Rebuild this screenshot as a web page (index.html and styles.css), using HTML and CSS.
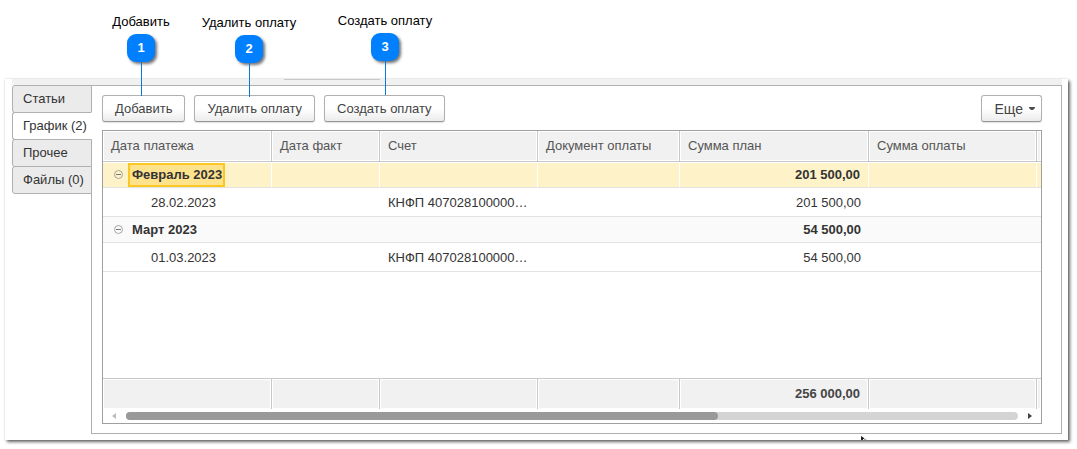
FILE: index.html
```html
<!DOCTYPE html>
<html lang="ru">
<head>
<meta charset="utf-8">
<title>График платежей</title>
<link rel="stylesheet" href="styles.css">
</head>
<body>
<div class="callout callout-add"><span>Добавить</span><b class="badge">1</b><i class="leader"></i></div>
<div class="callout callout-delete"><span>Удалить оплату</span><b class="badge">2</b><i class="leader"></i></div>
<div class="callout callout-create"><span>Создать оплату</span><b class="badge">3</b><i class="leader"></i></div>

<main class="window">
  <div class="strip"><span class="strip-edge"></span></div>
  <div class="layout">
    <nav class="tabs" role="tablist">
      <button class="tab" role="tab">Статьи</button>
      <button class="tab tab-active" role="tab" aria-selected="true">График (2)</button>
      <button class="tab" role="tab">Прочее</button>
      <button class="tab" role="tab">Файлы (0)</button>
    </nav>
    <section class="panel" role="tabpanel">
      <div class="toolbar">
        <button class="btn">Добавить</button>
        <button class="btn">Удалить оплату</button>
        <button class="btn">Создать оплату</button>
        <button class="btn btn-more">Еще<svg width="6" height="3" viewBox="0 0 6 3"><path d="M0 0h6v1L4 3H2L0 1z" fill="#505050"/></svg></button>
      </div>
      <div class="grid">
        <table class="table">
          <colgroup><col class="c-date"><col class="c-fact"><col class="c-account"><col class="c-doc"><col class="c-plan"><col class="c-paid"><col></colgroup>
          <thead>
            <tr><th>Дата платежа</th><th>Дата факт</th><th>Счет</th><th>Документ оплаты</th><th>Сумма план</th><th>Сумма оплаты</th><th></th></tr>
          </thead>
          <tbody>
            <tr class="group selected"><td><div class="group-cell"><svg class="toggle" width="9" height="9" viewBox="0 0 9 9"><circle cx="4.5" cy="4.5" r="4" fill="none" stroke="#a5a5a0"/><path d="M2 4.5h5" stroke="#777"/></svg><span class="group-name">Февраль 2023</span></div></td><td></td><td></td><td></td><td class="num">201 500,00</td><td></td><td></td></tr>
            <tr class="item"><td class="date">28.02.2023</td><td></td><td>КНФП 407028100000…</td><td></td><td class="num">201 500,00</td><td></td><td></td></tr>
            <tr class="group"><td><div class="group-cell"><svg class="toggle" width="9" height="9" viewBox="0 0 9 9"><circle cx="4.5" cy="4.5" r="4" fill="none" stroke="#a5a5a0"/><path d="M2 4.5h5" stroke="#777"/></svg><span class="group-name">Март 2023</span></div></td><td></td><td></td><td></td><td class="num">54 500,00</td><td></td><td></td></tr>
            <tr class="item"><td class="date">01.03.2023</td><td></td><td>КНФП 407028100000…</td><td></td><td class="num">54 500,00</td><td></td><td></td></tr>
            <tr class="empty"><td colspan="7"></td></tr>
          </tbody>
          <tfoot>
            <tr><td></td><td></td><td></td><td></td><td class="num">256 000,00</td><td></td><td></td></tr>
          </tfoot>
        </table>
        <div class="scroll">
          <button class="arrow" aria-label="Влево"><svg width="4" height="6" viewBox="0 0 4 6"><path d="M4 0v6L0 3z" fill="#bdbdbd"/></svg></button>
          <div class="track"><div class="thumb"></div></div>
          <button class="arrow" aria-label="Вправо"><svg width="4" height="6" viewBox="0 0 4 6"><path d="M0 0v6l4-3z" fill="#404040"/></svg></button>
        </div>
      </div>
    </section>
  </div>
  <svg class="pointer" width="7" height="4" viewBox="0 0 7 4"><path d="M0 0l3 2v1H2v1H0z" fill="#222"/><path d="M3 2l3 2H3z" fill="#aaa"/></svg>
</main>
</body>
</html>
```
FILE: styles.css
```css
* { box-sizing: border-box; }

body {
  margin: 0;
  padding: 79px 9px 9px 5px;
  background: #fff;
  color: #333;
  font: 13px/16px "Liberation Sans", Arial, sans-serif;
}

button {
  margin: 0;
  font: inherit;
  color: inherit;
}

/* Numbered callouts over the form */
.callout {
  position: absolute;
  z-index: 1;
  display: flex;
  flex-direction: column;
  align-items: center;
  width: 120px;
  color: #000;
}
.callout-add { left: 81px; top: 14px; }
.callout-delete { left: 189px; top: 15px; }
.callout-create { left: 325px; top: 13px; }
.badge {
  width: 28px;
  height: 28px;
  margin-top: 4px;
  border-radius: 9px;
  background: #0080ff;
  box-shadow: 2px 2px 3px rgba(0, 0, 0, .55);
  color: #fff;
  line-height: 28px;
  text-align: center;
}
.leader {
  width: 1px;
  height: 34px;
  background: #0a78e0;
}

.window {
  position: relative;
  padding: 0 6px 6px 7px;
  background: #fff;
  box-shadow: 2px 2px 3px rgba(0, 0, 0, .6), 0 0 2px rgba(0, 0, 0, .15);
}
.strip {
  height: 6px;
  background: #f1f1f1;
}
.strip-edge {
  display: block;
  width: 96px;
  height: 1px;
  margin-left: 272px;
  background: #c8c8c8;
}
.layout { display: flex; }
.tabs {
  position: relative;
  display: flex;
  flex-direction: column;
  width: 80px;
  margin-right: -1px;
}
.tab {
  height: 28px;
  margin-bottom: -1px;
  padding: 0 0 0 10px;
  border: 1px solid #b0b0b0;
  border-radius: 3px 0 0 3px;
  background: #ebebeb;
  text-align: left;
  white-space: nowrap;
}
.tab-active {
  border-right-color: #fff;
  background: #fff;
}
.panel {
  flex: 1;
  min-width: 0;
  padding: 9px 19px 9px 10px;
  border: 1px solid #b0b0b0;
}

.toolbar {
  display: flex;
  gap: 9px;
  margin-bottom: 8px;
}
.btn {
  height: 27px;
  padding: 0 12px;
  border: 1px solid #b0b0b0;
  border-bottom-color: #989898;
  border-radius: 3px;
  background: linear-gradient(#fff 50%, #ececec);
  box-shadow: 0 1px 1px rgba(0, 0, 0, .12);
  color: #444;
  white-space: nowrap;
}
.btn-more {
  display: flex;
  align-items: center;
  gap: 6px;
  margin-left: auto;
  padding: 0 6px 0 13px;
  font-size: 14px;
}

.grid { border: 1px solid #a0a0a0; }
.table {
  width: 100%;
  table-layout: fixed;
  border-collapse: separate;
  border-spacing: 0;
}
.c-date { width: 169px; }
.c-fact { width: 108px; }
.c-account { width: 158px; }
.c-doc { width: 142px; }
.c-plan { width: 189px; }
.c-paid { width: 168px; }

.table th,
.table td {
  padding: 0 8px;
  overflow: hidden;
  text-align: left;
  white-space: nowrap;
}
.table th:last-child,
.table td:last-child { padding: 0; }
.table th {
  height: 31px;
  border-right: 1px solid #c8c8c8;
  border-bottom: 1px solid #c8c8c8;
  background: #f1f1f1;
  box-shadow: inset 0 0 0 1px #fff;
  color: #555;
  font-weight: normal;
}
.table th:last-child,
.table tfoot td:last-child,
.selected td:last-child { border-right: 0; }
.group td {
  height: 26px;
  border-bottom: 1px solid #e2e2e2;
  background: #fafafa;
  font-weight: bold;
}
.selected td {
  border-right: 1px solid #fff;
  background: #fef2c8;
  box-shadow: inset 0 1px #fff;
}
.item td {
  height: 29px;
  padding-top: 1px;
  border-bottom: 1px solid #e2e2e2;
}
.table .date { padding-left: 48px; }
.table .num {
  padding-right: 8px;
  text-align: right;
}
.empty td { height: 106px; }
.table tfoot td {
  height: 31px;
  border-top: 1px solid #c8c8c8;
  border-right: 1px solid #c8c8c8;
  background: #f1f1f1;
  box-shadow: inset 0 0 0 1px #fff;
  color: #444;
  font-weight: bold;
}
.group-cell {
  display: flex;
  align-items: center;
  gap: 5px;
  padding-left: 3px;
}
.group-name {
  padding: 2px 1px 2px 2px;
  border: 2px solid transparent;
}
.selected .group-name {
  border-color: #fcc720;
  background: #fee28c;
}

.scroll {
  display: flex;
  align-items: center;
  height: 14px;
  padding: 0 9px;
  gap: 10px;
}
.arrow {
  display: flex;
  padding: 0;
  border: 0;
  background: none;
}
.track {
  flex: 1;
  height: 8px;
  border-radius: 4px;
  background: #d4d4d4;
}
.thumb {
  width: 66.4%;
  height: 8px;
  border-radius: 4px;
  background: #999;
}
.pointer {
  position: absolute;
  right: 200px;
  bottom: 0;
}
```
